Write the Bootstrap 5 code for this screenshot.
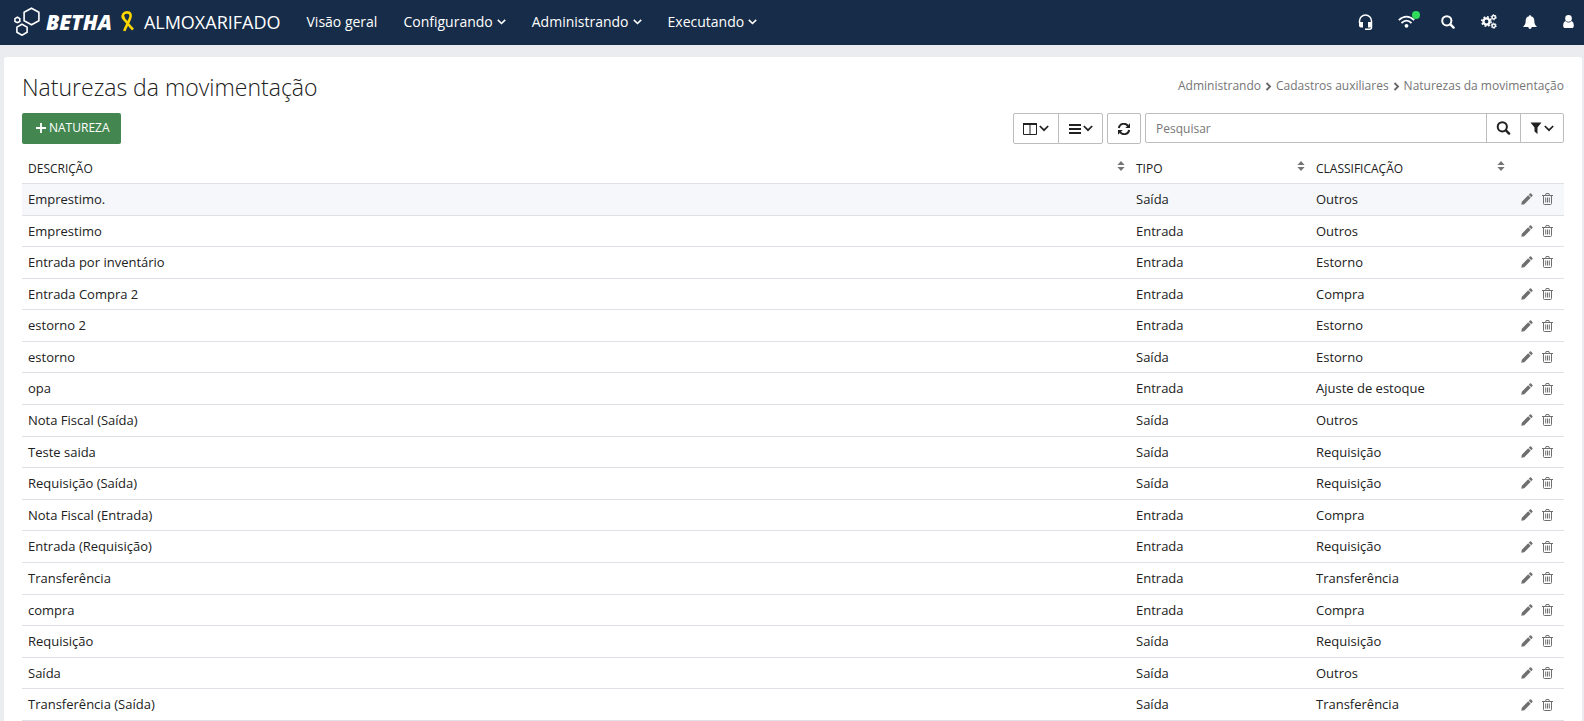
<!DOCTYPE html>
<html lang="pt-BR">
<head>
<meta charset="utf-8">
<meta name="viewport" content="width=device-width, initial-scale=1">
<title>Almoxarifado - Naturezas da movimentação</title>
<link href="https://cdn.jsdelivr.net/npm/bootstrap@5.3.0/dist/css/bootstrap.min.css" rel="stylesheet">
<style>
  body { font-family: "Open Sans", "Noto Sans", sans-serif; font-size: 13px; line-height: 1.43; color: #212121; background: #eaecf0; }
  svg { display: block; fill: currentColor; flex: none; }
  .ln { fill: none; stroke: currentColor; }
  .topbar { background: #162c48; height: 45px; padding: 0 9px 2px 14px; }
  .brand-name { font-size: 21px; font-weight: 800; font-style: italic; line-height: 24px; margin-left: 6px; }
  .product { font-size: 18px; line-height: 24px; }
  .topbar a, .topbar button { color: #fff; text-decoration: none; background: none; border: 0; padding: 0; }
  .menu { gap: 26px; font-size: 14px; margin-left: 26px; }
  .menu a, .menu button { display: flex; align-items: center; gap: 4px; line-height: 20px; font-weight: 500; }
  .tools { gap: 24px; }
  .tools button { width: 17px; display: flex; justify-content: center; position: relative; }
  .tools .user { width: 13px; }
  .online { position: absolute; right: -5px; top: -4px; width: 8px; height: 8px; border-radius: 50%; background: #2fdc5a; }
  .panel { margin: 12px 2px 0 4px; padding: 14px 18px 0; border-radius: 3px 3px 0 0; background: #fff; min-height: calc(100vh - 57px); }
  h1 { font-size: 23px; font-weight: 300; line-height: 32px; margin: 0; }
  .breadcrumb { font-size: 12px; line-height: 18px; gap: 4px; margin: 6px 0 0; --bs-breadcrumb-margin-bottom: 0; }
  .breadcrumb a, .breadcrumb span { color: #757575; text-decoration: none; }
  .breadcrumb svg { color: #666; }
  .actions { margin-top: 10px; gap: 4px; }
  .btn-new { background: #43864f; color: #fff; font-size: 12px; line-height: 18px; border-radius: 2px; padding: 6px 11px 7px 14px; border: 0; gap: 3px; }
  .btn-new:hover { background: #38733f; color: #fff; }
  .btn-tool { background: #fff; border: 1px solid #bdbdbd; border-radius: 2px; color: #212121; height: 31px; padding: 0 9px; gap: 2px; }
  .search { width: 419px; }
  .search .form-control { font-size: 12px; line-height: 18px; border: 1px solid #bdbdbd; border-radius: 2px; padding: 0 10px; height: 30px; min-height: 0; }
  .search .form-control::placeholder { color: #777; }
  .search .btn-tool { height: 30px; }
  .grid { table-layout: fixed; margin: 9px 0 0; --bs-table-color: #212121; --bs-table-bg: transparent; border-color: #dfe1e6; }
  .grid > :not(caption) > * > * { padding: 6px; }
  .grid th { font-size: 12px; font-weight: 500; line-height: 18px; }
  .grid > thead > tr > th { padding: 7px 5px 5px 6px; }
  .grid .picked { background: #f5f7fb; }
  .grid td button { background: none; border: 0; padding: 0; color: #6f6f6f; }
  .grid th svg { color: #757575; margin-top: -6px; }
  .row-tools { gap: 9px; justify-content: end; padding-right: 5px; }
  .c-tipo { width: 180px; } .c-class { width: 200px; } .c-act { width: 54px; }
</style>
</head>
<body>
<svg width="0" height="0" class="position-absolute" aria-hidden="true">
  <symbol id="down" viewBox="0 0 9 6"><path class="ln" stroke-width="1.6" d="M.8.9 4.5 4.5 8.2.9"/></symbol>
  <symbol id="down-lg" viewBox="0 0 10 7"><path class="ln" stroke-width="1.7" d="M.8 1 5 5.2 9.2 1"/></symbol>
  <symbol id="next" viewBox="0 0 7 9"><path class="ln" stroke-width="1.8" d="M1.500 1 5.1 4.5 1.500 8"/></symbol>
  <symbol id="find" viewBox="0 0 14 14"><circle class="ln" cx="5.8" cy="5.8" r="4.6" stroke-width="2"/><path class="ln" stroke-width="2.4" stroke-linecap="round" d="m9.4 9.4 3.2 3.2"/></symbol>
  <symbol id="sort" viewBox="0 0 8 10"><path d="M4 0 7.6 4H.4zM4 10 .4 6h7.2z"/></symbol>
  <symbol id="pen" viewBox="0 0 12 12"><path d="M8.900.6q.6-.6 1.200 0l1.300 1.300q.6.6 0 1.200L10.300 4.200 7.800 1.700zM7.200 2.300l2.500 2.500-6.400 6.400L.3 11.700.8 8.700z"/></symbol>
  <symbol id="bin" viewBox="0 0 11 12"><path class="ln" stroke-width="1" d="M0 2.5h11M3.5 2.5l.6-2h2.8l.6 2M1.5 2.5v8q0 1 1 1h6q1 0 1-1v-8M3.7 4.5v5M5.5 4.5v5M7.3 4.5v5"/></symbol>
</svg>

<header class="topbar d-flex align-items-center text-white">
  <a href="#" class="d-flex align-items-center" aria-label="Betha Almoxarifado">
    <svg width="26" height="29" viewBox="0 0 26 29"><g class="ln" stroke-width="1.6"><path d="m17.5 1.2 7.4 4.1v8.4l-7.4 4.1-7.4-4.1V5.300z"/><path d="m8 17.200 5.100 2.900v5.200L8 28.200l-5.100-2.900v-5.200z"/><path d="m3.400 10.200 2.400 1.400v2.800l-2.400 1.300L1 14.400v-2.800z"/></g></svg>
    <span class="brand-name">BETHA</span>
    <svg class="ms-2" width="16" height="21" viewBox="0 0 16 21"><path fill="none" stroke="#ffd600" stroke-width="2.6" d="M3.600 7.800C1.500 4.500 3.500 1.400 7 1.400S11.500 4 10 7.500C8.500 11.500 5.500 16 4.300 20M4.300 8.500C6 10 9 14.500 13 18.500M2.500 3.500 4.300 8.800"/></svg>
    <span class="product ms-2">ALMOXARIFADO</span>
  </a>
  <nav class="menu d-flex" aria-label="Principal">
    <a href="#">Visão geral</a>
    <button type="button">Configurando <svg width="9" height="6"><use href="#down"/></svg></button>
    <button type="button">Administrando <svg width="9" height="6"><use href="#down"/></svg></button>
    <button type="button">Executando <svg width="9" height="6"><use href="#down"/></svg></button>
  </nav>
  <div class="tools d-flex align-items-center ms-auto">
    <button type="button" aria-label="Suporte"><svg width="15" height="16" viewBox="0 0 15 16"><path class="ln" stroke-width="1.500" d="M1.500 9V7a6 6 0 0 1 12 0v6.200q0 2-2 2H7"/><path d="M1 8h4v5.500H3q-2 0-2-2zM10 8h4v3.500q0 2-2 2h-2z"/></svg></button>
    <button type="button" aria-label="Conexão"><svg width="17" height="13" viewBox="0 0 17 13"><path class="ln" stroke-width="1.700" d="M.8 5.200q7.700-7 15.400 0M3.500 8q5-4.600 10 0"/><circle cx="8.500" cy="10.800" r="1.900"/></svg><span class="online"></span></button>
    <button type="button" aria-label="Buscar"><svg width="14" height="14"><use href="#find"/></svg></button>
    <button type="button" aria-label="Configurações"><svg width="16" height="15" viewBox="0 0 16 15"><circle class="ln" cx="5.500" cy="7.500" r="3.100" stroke-width="2.400"/><circle class="ln" cx="5.500" cy="7.500" r="4.700" stroke-width="1.600" stroke-dasharray="1.850 1.840"/><circle class="ln" cx="12.700" cy="3.300" r="1.700" stroke-width="1.500"/><circle class="ln" cx="12.700" cy="3.300" r="2.600" stroke-width="1" stroke-dasharray="1.360 1.360"/><circle class="ln" cx="12.700" cy="11.700" r="1.700" stroke-width="1.500"/><circle class="ln" cx="12.700" cy="11.700" r="2.600" stroke-width="1" stroke-dasharray="1.360 1.360"/></svg></button>
    <button type="button" aria-label="Notificações"><svg width="14" height="14" viewBox="0 0 14 14"><path d="M7 0q.9 0 .9 1.300C10.300 1.800 11.300 3.500 11.300 5.500c0 3 .7 4.600 2.300 5.700v.8H.4v-.8c1.600-1.100 2.300-2.700 2.300-5.700 0-2 1-3.700 3.400-4.200Q6.100 0 7 0M5.300 12h3.400Q8.500 14 7 14t-1.700-2"/></svg></button>
    <button type="button" class="user" aria-label="Usuário"><svg width="11" height="13" viewBox="0 0 11 13"><circle cx="5.500" cy="3.400" r="3.300"/><path d="M2.500 5.900C.8 6.500.2 8.300.2 10.700.2 12.200 1 13 2.200 13h6.600c1.200 0 2-.8 2-2.300 0-2.400-.6-4.200-2.300-4.800Q7 7.400 5.500 7.400t-3-1.500"/></svg></button>
  </div>
</header>

<main class="panel">
  <div class="d-flex justify-content-between align-items-start">
    <h1>Naturezas da movimentação</h1>
    <nav class="breadcrumb d-flex align-items-center" aria-label="Trilha">
      <a href="#">Administrando</a><svg width="7" height="9"><use href="#next"/></svg>
      <a href="#">Cadastros auxiliares</a><svg width="7" height="9"><use href="#next"/></svg>
      <span aria-current="page">Naturezas da movimentação</span>
    </nav>
  </div>

  <div class="actions d-flex align-items-start">
    <button type="button" class="btn btn-new d-flex align-items-center me-auto"><svg width="10" height="10" viewBox="0 0 10 10"><path class="ln" stroke-width="1.800" d="M5 0v10M0 5h10"/></svg>NATUREZA</button>
    <div class="btn-group">
      <button type="button" class="btn btn-tool d-flex align-items-center" aria-label="Colunas"><svg width="14" height="12" viewBox="0 0 14 12"><path class="ln" d="M.5 1v10.500h13V1M7 1v10.500"/><path d="M0 0h14v2H0z"/></svg><svg width="10" height="7"><use href="#down-lg"/></svg></button>
      <button type="button" class="btn btn-tool d-flex align-items-center" aria-label="Densidade"><svg width="13" height="10" viewBox="0 0 13 10"><path d="M1 0h12v2H1zM1 4h12v2H1zM1 8h12v2H1z"/></svg><svg width="10" height="7"><use href="#down-lg"/></svg></button>
    </div>
    <button type="button" class="btn btn-tool d-flex align-items-center" aria-label="Atualizar"><svg width="14" height="12" viewBox="0 0 13 12"><path class="ln" stroke-width="1.900" d="M1.300 5A5.100 5.100 0 0 1 10.500 3M11.700 7A5.100 5.100 0 0 1 2.500 9"/><path d="M12.500.3v4.700H7.800zM.5 11.700V7h4.700z"/></svg></button>
    <form class="search input-group flex-nowrap" role="search">
      <input type="search" class="form-control" placeholder="Pesquisar" aria-label="Pesquisar">
      <button type="button" class="btn btn-tool d-flex align-items-center" aria-label="Pesquisar"><svg width="15" height="14"><use href="#find"/></svg></button>
      <button type="button" class="btn btn-tool d-flex align-items-center" aria-label="Filtros"><svg width="12" height="12" viewBox="0 0 12 12"><path d="M.5.500h11L7.500 5.500V12l-3-2.500v-4z"/></svg><svg width="10" height="7"><use href="#down-lg"/></svg></button>
    </form>
  </div>

  <table class="table grid">
    <colgroup><col><col class="c-tipo"><col class="c-class"><col class="c-act"></colgroup>
    <thead>
      <tr>
        <th scope="col"><div class="d-flex align-items-center justify-content-between">DESCRIÇÃO<svg width="8" height="10"><use href="#sort"/></svg></div></th>
        <th scope="col"><div class="d-flex align-items-center justify-content-between">TIPO<svg width="8" height="10"><use href="#sort"/></svg></div></th>
        <th scope="col"><div class="d-flex align-items-center justify-content-between">CLASSIFICAÇÃO<svg width="8" height="10"><use href="#sort"/></svg></div></th>
        <th scope="col" aria-label="Ações"></th>
      </tr>
    </thead>
    <tbody id="rows"></tbody>
  </table>
</main>

<script src="https://cdn.jsdelivr.net/npm/bootstrap@5.3.0/dist/js/bootstrap.bundle.min.js"></script>
<script>
  const naturezas = [
    ["Emprestimo.", "Saída", "Outros"],
    ["Emprestimo", "Entrada", "Outros"],
    ["Entrada por inventário", "Entrada", "Estorno"],
    ["Entrada Compra 2", "Entrada", "Compra"],
    ["estorno 2", "Entrada", "Estorno"],
    ["estorno", "Saída", "Estorno"],
    ["opa", "Entrada", "Ajuste de estoque"],
    ["Nota Fiscal (Saída)", "Saída", "Outros"],
    ["Teste saida", "Saída", "Requisição"],
    ["Requisição (Saída)", "Saída", "Requisição"],
    ["Nota Fiscal (Entrada)", "Entrada", "Compra"],
    ["Entrada (Requisição)", "Entrada", "Requisição"],
    ["Transferência", "Entrada", "Transferência"],
    ["compra", "Entrada", "Compra"],
    ["Requisição", "Saída", "Requisição"],
    ["Saída", "Saída", "Outros"],
    ["Transferência (Saída)", "Saída", "Transferência"]
  ];
  document.getElementById("rows").innerHTML = naturezas.map(([nome, tipo, classe], i) => `
    <tr${i === 0 ? ' class="picked"' : ""}>
      <td>${nome}</td><td>${tipo}</td><td>${classe}</td>
      <td class="align-middle"><div class="row-tools d-flex align-items-center">
        <button type="button" aria-label="Editar ${nome}"><svg width="12" height="12"><use href="#pen"/></svg></button>
        <button type="button" aria-label="Excluir ${nome}"><svg width="11" height="12"><use href="#bin"/></svg></button>
      </div></td>
    </tr>`).join("");
</script>
</body>
</html>
